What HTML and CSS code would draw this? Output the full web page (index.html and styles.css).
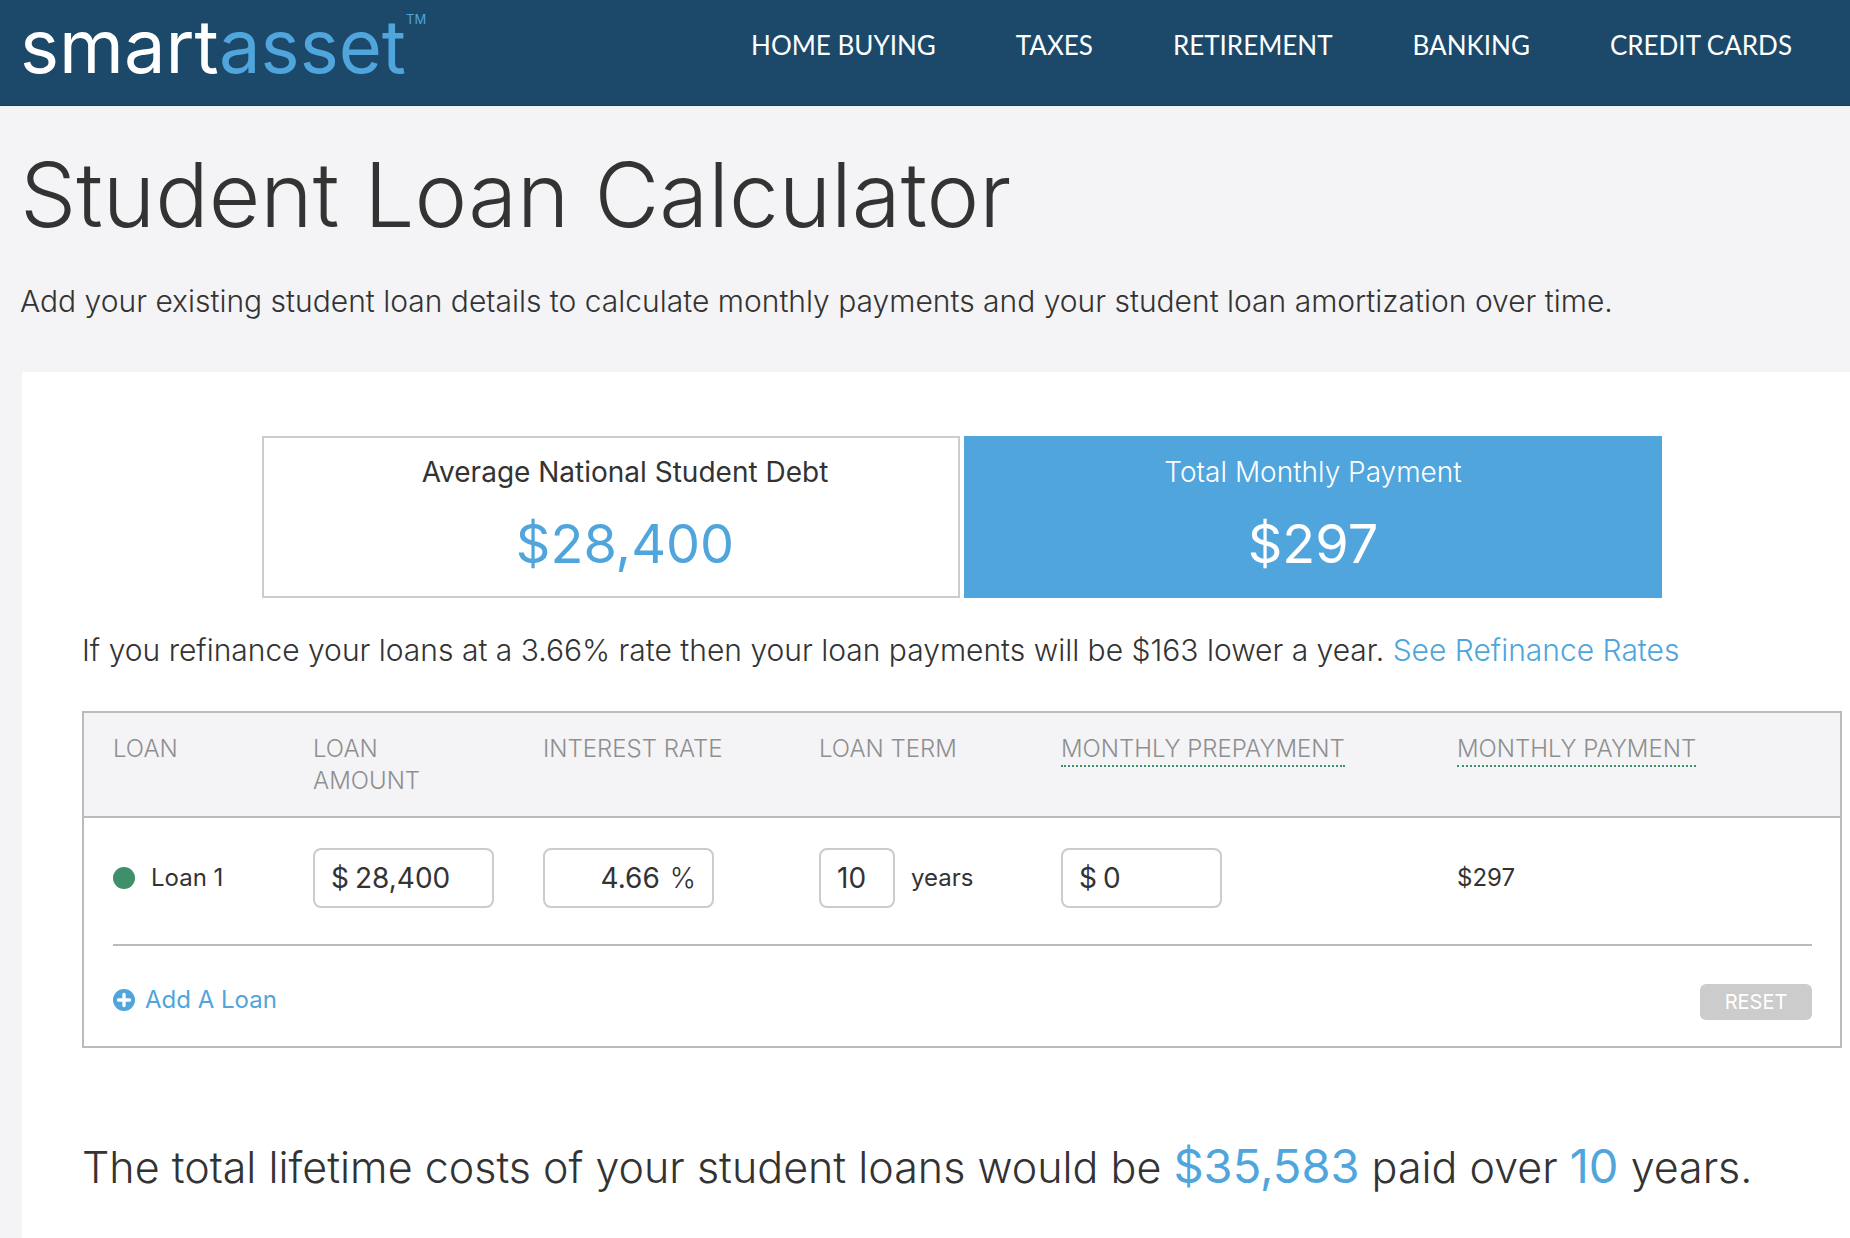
FILE: index.html
```html
<!DOCTYPE html>
<html lang="en">
<head>
  <meta charset="UTF-8" />
  <meta name="viewport" content="width=device-width, initial-scale=1" />
  <title>Student Loan Calculator - SmartAsset</title>
  <link rel="stylesheet" href="styles.css">
</head>
<body>
  <header class="site-header">
    <a class="logo" href="#"><span class="logo-text">smart<span class="logo-asset">asset</span></span><span class="logo-tm">TM</span></a>
    <nav class="main-nav">
      <a href="#">HOME BUYING</a>
      <a href="#">TAXES</a>
      <a href="#">RETIREMENT</a>
      <a href="#">BANKING</a>
      <a href="#">CREDIT CARDS</a>
    </nav>
  </header>

  <section class="intro">
    <h1>Student Loan Calculator</h1>
    <p>Add your existing student loan details to calculate monthly payments and your student loan amortization over time.</p>
  </section>

  <main class="card">
    <div class="summary">
      <div class="summary-box debt">
        <h2>Average National Student Debt</h2>
        <div class="amount">$28,400</div>
      </div>
      <div class="summary-box payment">
        <h2>Total Monthly Payment</h2>
        <div class="amount">$297</div>
      </div>
    </div>

    <p class="refinance">If you refinance your loans at a 3.66% rate then your loan payments will be $163 lower a year. <a href="#">See Refinance Rates</a></p>

    <form class="loans">
      <table>
        <colgroup>
          <col class="col-loan" />
          <col class="col-amount" />
          <col class="col-rate" />
          <col class="col-term" />
          <col class="col-prepay" />
          <col />
        </colgroup>
        <thead>
          <tr>
            <th>LOAN</th>
            <th>LOAN<br />AMOUNT</th>
            <th>INTEREST RATE</th>
            <th>LOAN TERM</th>
            <th><span class="tip">MONTHLY PREPAYMENT</span></th>
            <th><span class="tip">MONTHLY PAYMENT</span></th>
          </tr>
        </thead>
        <tbody>
          <tr>
            <td><div class="loan-name"><span class="dot"></span>Loan 1</div></td>
            <td><label class="field amount-field"><span>$</span><input type="text" value="28,400" aria-label="Loan amount" /></label></td>
            <td><label class="field rate-field"><input type="text" value="4.66" aria-label="Interest rate" /><span>%</span></label></td>
            <td>
              <div class="term">
                <span class="field term-field"><input type="text" id="term" value="10" /></span>
                <label for="term">years</label>
              </div>
            </td>
            <td><label class="field prepay-field"><span>$</span><input type="text" value="0" aria-label="Monthly prepayment" /></label></td>
            <td>$297</td>
          </tr>
        </tbody>
      </table>
      <div class="loans-footer">
        <button type="button" class="add-loan">
          <svg width="22" height="22" viewBox="0 0 22 22" aria-hidden="true">
            <circle cx="11" cy="11" r="11" fill="#4fa5dc" />
            <path d="M11 5.5v11M5.5 11h11" stroke="#fff" stroke-width="3.4" stroke-linecap="round" />
          </svg>
          Add A Loan
        </button>
        <button type="reset" class="reset">RESET</button>
      </div>
    </form>

    <p class="lifetime">The total lifetime costs of your student loans would be <strong>$35,583</strong> paid over <strong>10</strong> years.</p>
  </main>
</body>
</html>
```
FILE: styles.css
```css
* {
  box-sizing: border-box;
}

body {
  margin: 0;
  min-height: 100vh;
  display: flex;
  flex-direction: column;
  font-family: Inter, "Open Sans", sans-serif;
  background: #f4f4f6;
  color: #333;
}

h1, h2, p {
  margin: 0;
  font-weight: 400;
}

a {
  color: #4fa5dc;
  text-decoration: none;
}

input, button {
  font: inherit;
  color: inherit;
  background: none;
  border: none;
  padding: 0;
}

button {
  cursor: pointer;
}

/* header */
.site-header {
  display: flex;
  justify-content: space-between;
  align-items: flex-start;
  padding: 14px 58px 27px 20px;
  background: #1c496a;
  border-bottom: 1px solid #133f60;
}

.logo {
  display: flex;
  color: #fff;
}

.logo-text {
  font-size: 74px;
  line-height: 64px;
}

.logo-asset {
  color: #4fa5dc;
}

.logo-tm {
  color: #4fa5dc;
  font-size: 13px;
  line-height: 10px;
}

.main-nav {
  display: flex;
  gap: 80px;
  padding-top: 15px;
  font-family: Lato, sans-serif;
}

.main-nav a {
  color: #fff;
  font-size: 26px;
  line-height: 32px;
}

/* intro */
.intro {
  padding: 36px 20px 49px;
}

.intro h1 {
  font-size: 89px;
  line-height: 106px;
  font-weight: 300;
}

.intro p {
  margin-top: 31px;
  font-size: 30px;
  line-height: 44px;
  font-weight: 300;
}

/* calculator */
.card {
  flex: 1;
  margin-left: 22px;
  padding: 64px 8px 40px 60px;
  background: #fff;
}

.summary {
  display: grid;
  grid-template-columns: 1fr 1fr;
  gap: 4px;
  max-width: 1400px;
  margin: 0 auto;
  text-align: center;
}

.summary-box {
  padding: 16px 0 20px;
  border: 2px solid #ccc;
}

.summary-box h2 {
  font-size: 28px;
  line-height: 36px;
}

.summary-box .amount {
  margin-top: 22px;
  font-size: 54px;
  line-height: 64px;
}

.debt {
  padding-left: 28px;
}

.debt .amount {
  color: #4fa5dc;
}

.payment {
  background: #4fa5dc;
  border-color: #4fa5dc;
  color: #fff;
}

.payment h2 {
  font-weight: 300;
}

.refinance {
  margin: 30px 0 39px;
  font-size: 30px;
  line-height: 44px;
  font-weight: 300;
}

.loans {
  border: 2px solid #bbb;
  font-size: 24px;
  line-height: 32px;
}

.loans table {
  width: 100%;
  table-layout: fixed;
  border-collapse: collapse;
}

.col-loan {
  width: 200px;
}

.col-amount {
  width: 230px;
}

.col-rate {
  width: 276px;
}

.col-term {
  width: 242px;
}

.col-prepay {
  width: 396px;
}

.loans th {
  padding: 20px 0 19px 29px;
  background: #f4f4f6;
  border-bottom: 2px solid #bbb;
  color: #8f8f8f;
  font-weight: 300;
  text-align: left;
  vertical-align: top;
}

.loans td {
  padding: 30px 0 36px 29px;
}

.tip {
  padding-bottom: 2px;
  border-bottom: 2px dotted #3f8f6b;
}

.loan-name {
  display: flex;
  align-items: center;
  gap: 16px;
}

.dot {
  width: 22px;
  height: 22px;
  border-radius: 50%;
  background: #3f8f6b;
}

.field {
  display: flex;
  align-items: center;
  gap: 6px;
  height: 60px;
  padding: 0 16px;
  border: 2px solid #ccc;
  border-radius: 8px;
  font-size: 28px;
}

.field input {
  flex: 1;
  min-width: 0;
  width: 100%;
}

.amount-field {
  width: 181px;
}

.rate-field {
  width: 171px;
  gap: 10px;
}

.rate-field input {
  text-align: right;
}

.rate-field span {
  font-weight: 300;
}

.term {
  display: flex;
  align-items: center;
  gap: 16px;
}

.term-field {
  width: 76px;
}

.prepay-field {
  width: 161px;
}

.loans-footer {
  display: flex;
  justify-content: space-between;
  align-items: flex-start;
  margin: 0 28px 0 29px;
  padding: 38px 0 26px;
  border-top: 2px solid #bbb;
}

.add-loan {
  display: flex;
  align-items: center;
  gap: 10px;
  color: #4fa5dc;
}

.reset {
  width: 112px;
  height: 36px;
  border-radius: 6px;
  background: #ccc;
  color: #fff;
  font-size: 20px;
}

.lifetime {
  margin-top: 88px;
  font-size: 43px;
  line-height: 60px;
  font-weight: 300;
}

.lifetime strong {
  color: #4fa5dc;
  font-size: 47px;
  font-weight: 400;
}
```
